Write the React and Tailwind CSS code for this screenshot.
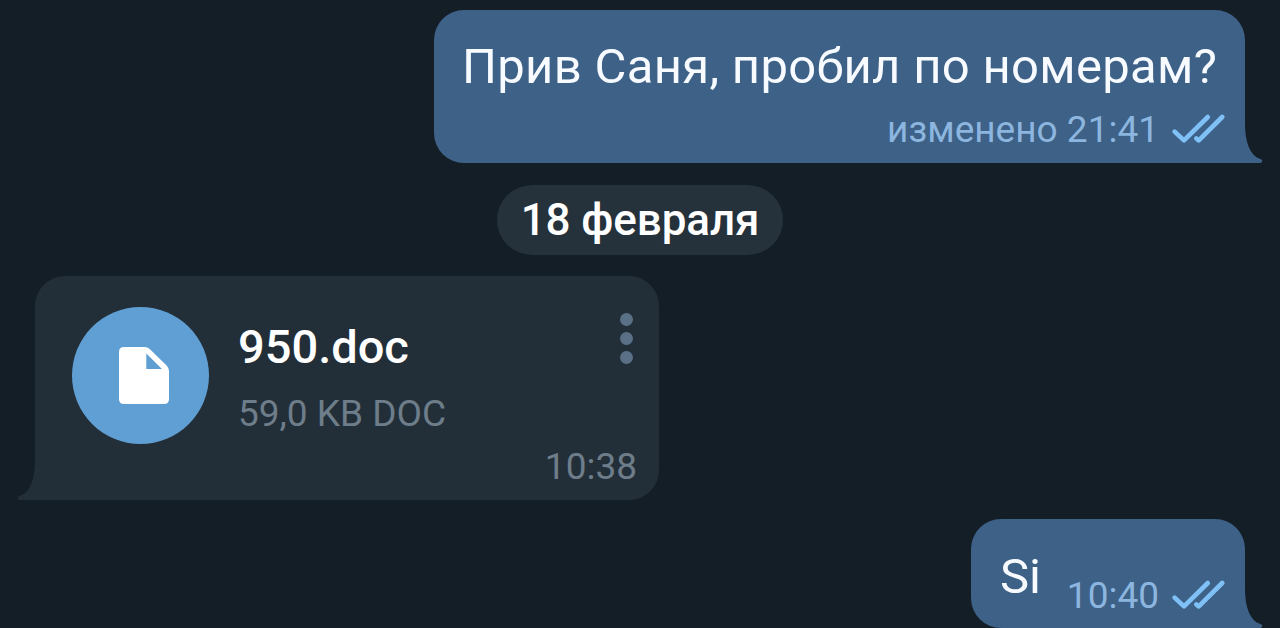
import React from 'react';

const Tail = ({ side, color }) => (
    <svg
        width="19"
        height="38"
        viewBox="0 0 19 38"
        className={`absolute bottom-0 ${side === 'right' ? '-right-[18px]' : '-left-[18px] -scale-x-100'}`}
        fill={color}
    >
        <path d="M0 0H1C1.2 18 6.5 30.5 15.8 33.8Q18 34.6 18.3 35.5Q18.3 37.5 16.5 38H0Z" />
    </svg>
);

const Checks = () => (
    <svg
        width="54"
        height="32"
        viewBox="0 0 54 32"
        fill="none"
        stroke="#7fc1f7"
        strokeWidth="4.6"
        strokeLinecap="round"
        strokeLinejoin="round"
    >
        <path d="M3.6 18.6L13 27.4L36.8 4" />
        <path d="M25.4 25.4L27.8 27.4L51.2 4" />
    </svg>
);

const FileIcon = () => (
    <svg width="50" height="57" viewBox="0 0 50 57" fill="#fff">
        <path
            fillRule="evenodd"
            d="M5 0H25.5Q28.5 0 30.7 2L47.6 18.5Q50 21 50 24V52Q50 57 45 57H5Q0 57 0 52V5Q0 0 5 0ZM27.3 6.5V22H43Z"
        />
    </svg>
);

const OutMessage = ({ className, children }) => (
    <div className={`relative self-end rounded-[30px] rounded-br-none bg-[#3e6188] ${className}`}>
        {children}
        <Tail side="right" color="#3e6188" />
    </div>
);

export default function App() {
    return (
        <div className="flex h-[628px] w-full flex-col overflow-hidden bg-[#141e26] pt-2.5 pr-[35px] pl-[35px] font-['Roboto','Noto_Sans',sans-serif] whitespace-nowrap">
            <OutMessage className="h-[153px] w-[811px] shrink-0 pt-7">
                <p className="pl-7 text-[49px] leading-[58px] tracking-[0.31px] text-[#f7fbff]">Прив Саня, пробил по номерам?</p>
                <div className="mt-3 flex justify-end pr-5">
                    <span className="mr-3 text-[37px] leading-[44px] text-[#8cb6df]">изменено 21:41</span>
                    <div className="pt-[5px]"><Checks /></div>
                </div>
            </OutMessage>

            <div className="mt-[22px] flex h-[70px] w-[286px] shrink-0 items-center justify-center self-center rounded-full bg-[#25313b]">
                <span className="text-[44px] leading-[52px] font-medium tracking-[-0.1px] text-white">18 февраля</span>
            </div>

            <div className="relative mt-[21px] flex h-[224px] w-[624px] shrink-0 rounded-[30px] rounded-bl-none bg-[#232f38] pl-[37px]">
                <Tail side="left" color="#232f38" />
                <div className="mt-[31px] flex size-[137px] shrink-0 items-center justify-center rounded-full bg-[#609fd3] pl-1.5">
                    <FileIcon />
                </div>
                <div className="ml-[29px] flex-1 pt-[43px]">
                    <p className="text-[47px] leading-[56px] font-medium text-white">950.doc</p>
                    <p className="mt-[17px] text-[37px] leading-[44px] text-[#6e7d8a]">59,0 KB DOC</p>
                </div>
                <div className="flex flex-col items-end justify-between pt-[37px] pr-[22px] pb-[11px]">
                    <div className="mr-1 flex flex-col gap-1.5">
                        <span className="size-[13px] rounded-full bg-[#597086]" />
                        <span className="size-[13px] rounded-full bg-[#597086]" />
                        <span className="size-[13px] rounded-full bg-[#597086]" />
                    </div>
                    <span className="text-[37px] leading-[44px] text-[#6e7d8a]">10:38</span>
                </div>
            </div>

            <OutMessage className="mt-[19px] flex h-[109px] w-[274px] shrink-0 justify-between pr-5 pl-[29px]">
                <p className="pt-[29px] text-[49px] leading-[58px] text-[#f7fbff]">Si</p>
                <div className="flex pt-[55px]">
                    <span className="mr-3 text-[37px] leading-[44px] text-[#8cb6df]">10:40</span>
                    <div className="pt-[5px]"><Checks /></div>
                </div>
            </OutMessage>
        </div>
    );
}
